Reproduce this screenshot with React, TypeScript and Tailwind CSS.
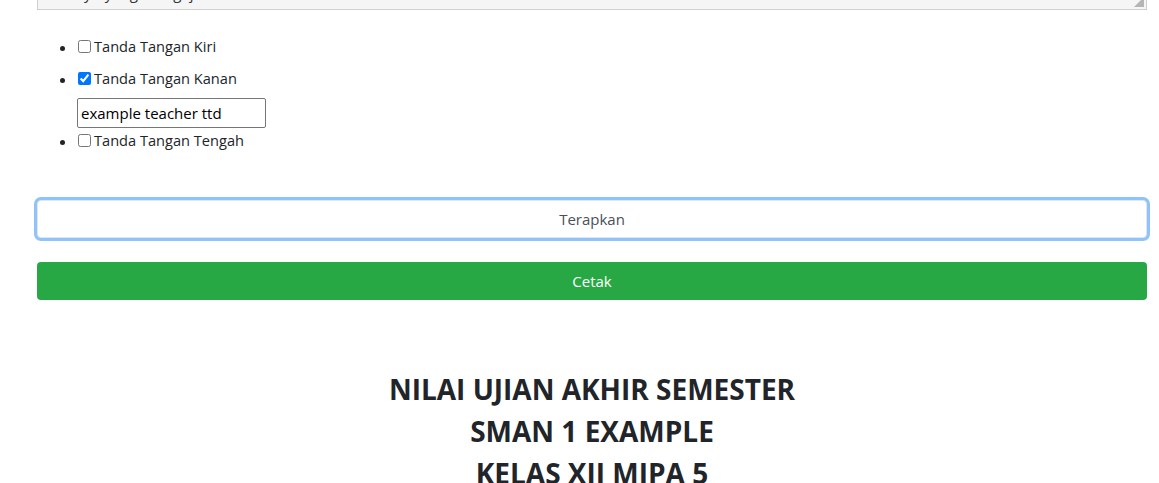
import React from "react";

export default function App() {
  const font = { fontFamily: '"Segoe UI", "Open Sans", "Noto Sans", sans-serif' };
  return (
    <div className="bg-white w-[1159px] h-[483px] overflow-hidden text-[#212529]" style={font}>
      <div className="ml-[37px] w-[1110px]">
        <div className="relative mt-[-30px] h-[40px] border border-[#cfcfcf] bg-[#f5f5f5] overflow-hidden">
          <div className="absolute left-[28px] top-[15px] text-[15px] leading-[15px] text-[#333]">Bayu yang mengajar</div>
          <svg className="absolute right-[2px] bottom-[2px]" width="12" height="12" viewBox="0 0 12 12">
            <polygon points="12,2 12,12 2,12" fill="#b5b5b5" />
          </svg>
        </div>

        <ul className="list-disc pl-[40px] mt-[25px] text-[14.6px] leading-[22px]">
          <li className="mb-[10px]">
            <label className="flex items-center">
              <input type="checkbox" className="w-[13px] h-[13px] ml-[1px] mr-[3px]" />
              <span>Tanda Tangan Kiri</span>
            </label>
          </li>
          <li>
            <label className="flex items-center">
              <input type="checkbox" defaultChecked className="w-[13px] h-[13px] ml-[1px] mr-[3px]" />
              <span>Tanda Tangan Kanan</span>
            </label>
            <input
              type="text"
              defaultValue="example teacher ttd"
              className="mt-[9px] block w-[189px] h-[30px] border border-[#767676] rounded-[2px] px-[3px] text-[15px] text-black outline-none"
            />
          </li>
          <li className="mt-[1px]">
            <label className="flex items-center">
              <input type="checkbox" className="w-[13px] h-[13px] ml-[1px] mr-[3px]" />
              <span>Tanda Tangan Tengah</span>
            </label>
          </li>
        </ul>

        <button className="mt-[49px] block w-full h-[38px] rounded-[4px] border border-[#e2e6ea] bg-white text-[15px] text-[#495057] ring-[3px] ring-[#8ec3fc]">
          Terapkan
        </button>
        <button className="mt-[24px] block w-full h-[38px] rounded-[4px] bg-[#28a745] text-[15px] text-white">
          Cetak
        </button>

        <div className="mt-[68px] text-center text-[28px] leading-[42px] font-bold text-[#212529]">
          <div>NILAI UJIAN AKHIR SEMESTER</div>
          <div>SMAN 1 EXAMPLE</div>
          <div>KELAS XII MIPA 5</div>
        </div>
      </div>
    </div>
  );
}
